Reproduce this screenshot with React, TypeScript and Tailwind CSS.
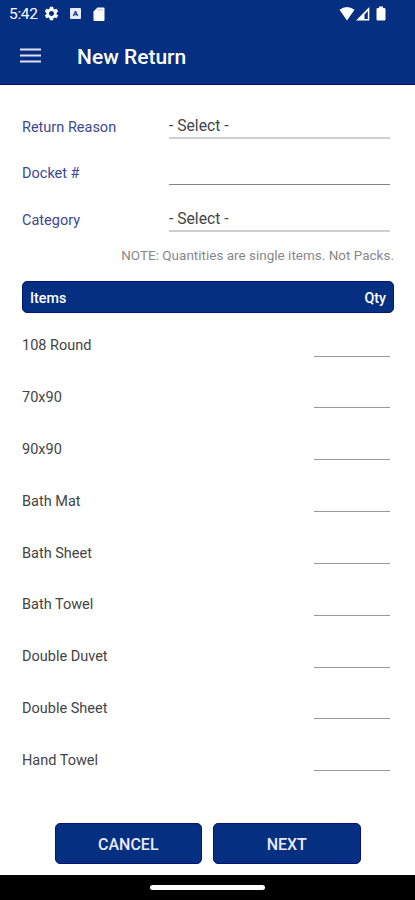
import { MdSettings } from 'react-icons/md'

interface Field { label: string; value?: string }

const fields: Field[] = [
  { label: 'Return Reason', value: '- Select -' },
  { label: 'Docket #' },
  { label: 'Category', value: '- Select -' },
]

const items = ['108 Round', '70x90', '90x90', 'Bath Mat', 'Bath Sheet', 'Bath Towel', 'Double Duvet', 'Double Sheet', 'Hand Towel']

const StatusBar = () => (
  <div className="flex h-[27px] items-center justify-between pl-[9px] pr-[28px] text-white">
    <div className="flex items-center">
      <span className="w-[28px] whitespace-nowrap pt-[2px] text-[15.500px] leading-none tracking-[-0.3px]">5:42</span>
      <MdSettings className="ml-[6px] size-[17px]" />
      <span className="ml-[10px] flex size-[11px] items-center justify-center rounded-[1px] bg-[#e8ebfa] text-[8px] font-bold leading-none text-[#052f80]">A</span>
      <svg className="ml-[12px] h-[14px] w-[12px]" viewBox="0 0 12 14" fill="currentColor">
        <path d="M4.500 0.500H10.500Q11.500 0.500 11.500 1.500V13Q11.500 14 10.500 14H1.500Q0.500 14 0.500 13V4.500Z" />
        <path d="M5 2v1.500M7 2v1.500M9 2v1.500" stroke="#8896c0" strokeWidth="0.800" />
      </svg>
    </div>
    <svg className="h-[16px] w-[48px]" viewBox="0 0 48 16" fill="currentColor">
      <path d="M0.500 3.800Q8 -1.800 15.500 3.800L8 14.500Z" />
      <path d="M30.300 1V14.500H17Z" />
      <path d="M28.800 5V13h-3.300V8.500Z" fill="#052f80" />
      <path d="M40 0.500h4V2h1.200q1.300 0 1.300 1.200v10q0 1.300-1.300 1.300h-6.400q-1.300 0-1.300-1.300v-10Q37.500 2 38.800 2H40Z" />
    </svg>
  </div>
)

export default function App() {
  return (
    <div className="flex h-[900px] w-[415px] flex-col overflow-hidden bg-white font-['Roboto',sans-serif]">
      <header className="h-[84.500px] shrink-0 border-b border-[#04106a] bg-[#052f80] text-white">
        <StatusBar />
        <div className="flex h-[57px] items-center pl-[20px]">
          <svg className="h-[15px] w-[21px] text-[#e2e0fa]" viewBox="0 0 21 15" fill="none" stroke="currentColor" strokeWidth="2.200">
            <path d="M0 1.500h21M0 7.500h21M0 13.500h21" />
          </svg>
          <h1 className="ml-[36px] pt-[4px] text-[21px] font-medium leading-none">New Return</h1>
        </div>
      </header>

      <main className="flex grow flex-col pl-[22px] pr-[21px] pt-[20px]">
        {fields.map(({ label, value }) => (
          <div key={label} className="flex h-[46.500px] shrink-0 items-start">
            <label className="w-[147px] pt-[14px] text-[14.500px] leading-[17px] text-[#3c4791]">{label}</label>
            {value ? (
              <div className="h-[34px] w-[221px] border-b-2 border-[#cfcfcf] pt-[12px] text-[15.700px] leading-[17px] text-[#444]">{value}</div>
            ) : (
              <div className="h-[34px] w-[221px] border-b border-[#858585]" />
            )}
          </div>
        ))}

        <p className="mt-[3px] whitespace-nowrap text-right text-[13.500px] leading-[17px] text-[#888]">NOTE: Quantities are single items. Not Packs.</p>

        <div className="mt-[17px] flex h-[32px] shrink-0 items-center justify-between rounded-[5px] border border-[#04147a] bg-[#052f80] px-[7px] pt-[4px] text-[14.300px] font-medium text-white">
          <span>Items</span>
          <span>Qty</span>
        </div>

        <div className="mt-[5.500px]">
          {items.map(name => (
            <div key={name} className="flex h-[51.850px] items-start justify-between pr-[4px]">
              <span className="pt-[18.700px] text-[14.500px] leading-[17px] text-[#444]">{name}</span>
              <div className="h-[38px] w-[76px] border-b border-[#999]" />
            </div>
          ))}
        </div>
      </main>

      <footer className="shrink-0">
        <div className="flex h-[52px] justify-center gap-[11px]">
          {['CANCEL', 'NEXT'].map(action => (
            <button key={action} className="h-[41px] w-[147.500px] rounded-[5px] border border-[#04147a] bg-[#052f80] pt-[3px] text-[16px] font-medium text-[#eceafa]">{action}</button>
          ))}
        </div>
        <div className="flex h-[25px] justify-center bg-black pt-[10px]">
          <div className="h-[5px] w-[115px] rounded-full bg-white" />
        </div>
      </footer>
    </div>
  )
}
